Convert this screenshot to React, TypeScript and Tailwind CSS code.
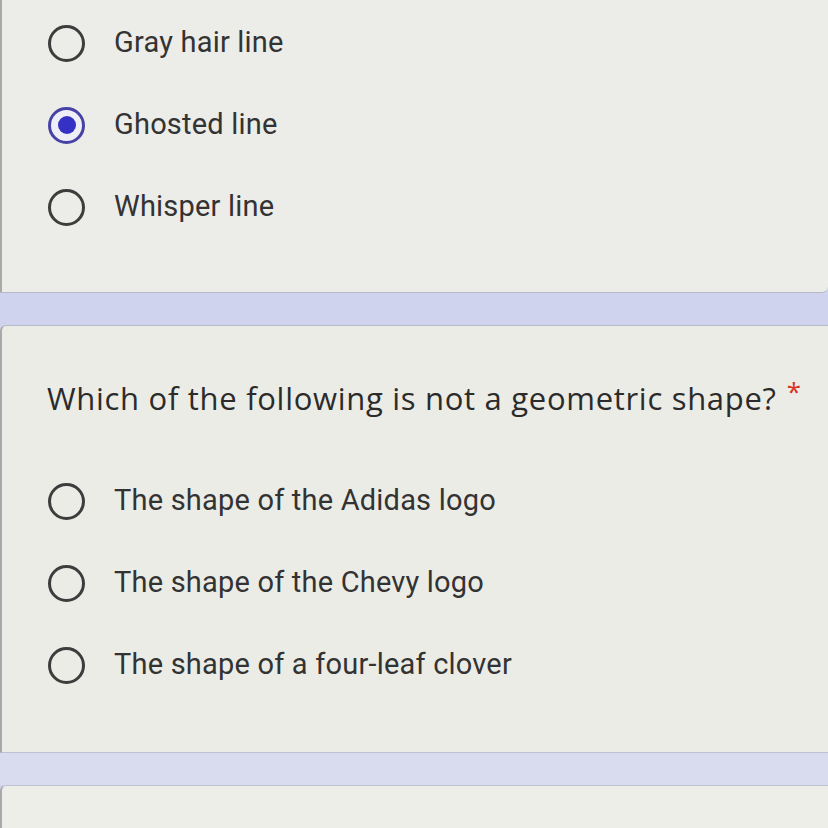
import React from 'react';

const Radio: React.FC<{ checked?: boolean }> = ({ checked }) => {
    if (checked) {
        return (
            <div className="flex items-center justify-center w-[37px] h-[37px] rounded-full border-[3px] border-[#4743a6] bg-[#eeeef6]">
                <div className="w-[18px] h-[18px] rounded-full bg-[#3431c4]" />
            </div>
        );
    }
    return <div className="w-[37px] h-[37px] rounded-full border-[3px] border-[#3d3d3d]" />;
};

const Option: React.FC<{ label: string, checked?: boolean }> = ({ label, checked }) => (
    <div className="flex items-center h-[82px] pl-[46px]">
        <Radio checked={checked} />
        <span className="ml-[29px] text-[29px] text-[#333333] font-['Roboto',sans-serif] tracking-[0.2px]">{label}</span>
    </div>
);

function App() {
    return (
        <div className="h-[828px] overflow-hidden bg-[#d0d3ee] font-['Roboto',sans-serif]">
            <div className="h-[293px] bg-[#ecece8] border-l-[2px] border-[#a9a9a9] border-b border-b-[#b8b9c8] rounded-br-md pt-[2px]">
                <Option label="Gray hair line" />
                <Option label="Ghosted line" checked />
                <Option label="Whisper line" />
            </div>
            <div className="h-[32px]" />
            <div className="h-[428px] bg-[#ecece7] border-l-[2px] border-[#a9a9a9] border-t border-t-[#b8b9c8] border-b border-b-[#bfc1d0] rounded-tl-md pt-[52px]">
                <div className="h-[40px] flex items-center pl-[45px] text-[31px] text-[#2b2b2b] font-['Open_Sans',sans-serif] tracking-[0.7px]">
                    Which of the following is not a geometric shape?
                    <span className="ml-[10px] text-[#d93025] self-start text-[26px] leading-[26px]">*</span>
                </div>
                <div className="pt-[42px]">
                    <Option label="The shape of the Adidas logo" />
                    <Option label="The shape of the Chevy logo" />
                    <Option label="The shape of a four-leaf clover" />
                </div>
            </div>
            <div className="h-[32px] bg-[#d9dbee]" />
            <div className="h-[60px] bg-[#eeeee9] border-l-[2px] border-[#a9a9a9] border-t border-t-[#c0c2d0] rounded-tl-md" />
        </div>
    );
}

export default App;
